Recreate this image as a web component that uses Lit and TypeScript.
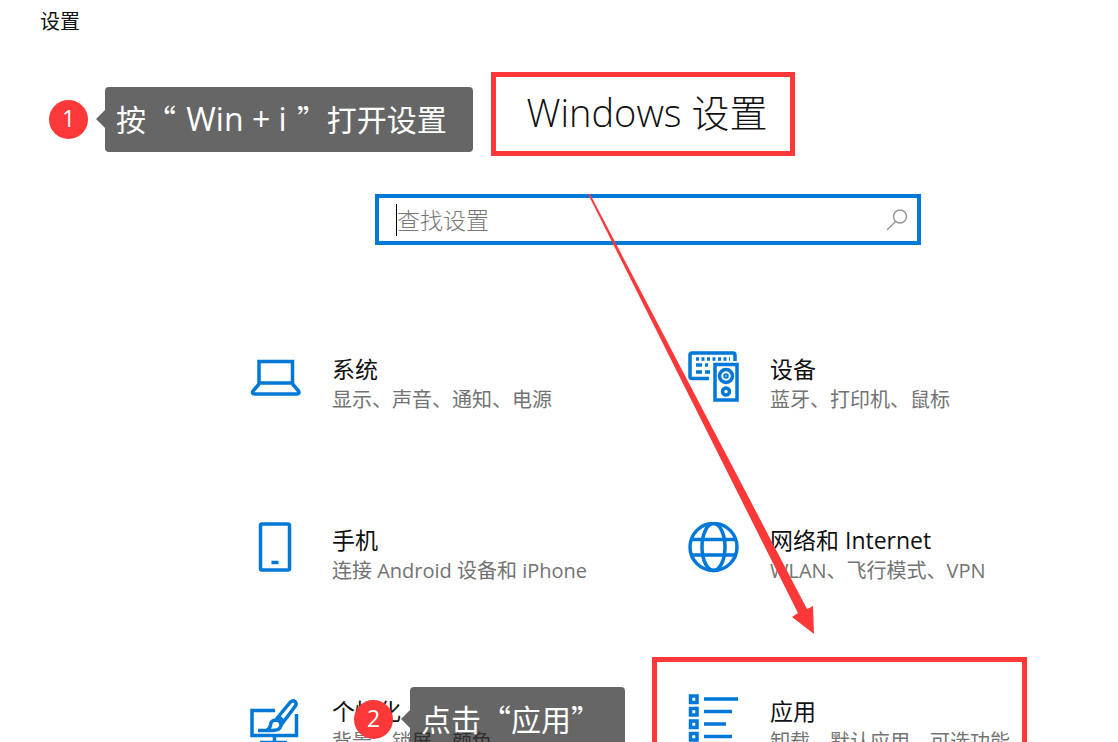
import { LitElement, html, svg, css } from "lit";
import { customElement, property } from "lit/decorators.js";

const icons: Record<string, unknown> = {
  system: svg`<path d="M9 10.500h33.500v21.500H9zM9 33 3 40q-1.500 3 1.500 3h42.500q3 0 1.500-3l-6-7"/>`,
  devices: svg`<path d="M21 27.500H4q-2 0-2-2V4q0-2 2-2h41q2 0 2 2v6"/><path stroke-dasharray="3 2.500" d="M8 8h34"/><path d="M8 14h6M17 14h3M8 21h6M17 21h5"/><path d="M27 13.500h22v35.500H27z"/><circle cx="38" cy="25" r="6.500"/><circle cx="38" cy="25" r="1"/><circle cx="38" cy="40.500" r="3.500"/>`,
  phone: svg`<rect x="10.500" y="2" width="29" height="46" rx="1.500"/><path d="M21.500 40.500h7"/>`,
  network: svg`<circle cx="25.500" cy="25" r="23.500"/><ellipse cx="25.500" cy="25" rx="11.500" ry="23.500"/><path d="M4 17.500h43M4 33h43"/>`,
  personal: svg`<path d="M25 17.500H2v25h44.500V21M24.500 43v7M10 49.500h27"/><path d="M26 26.500 40.500 9q3-2.500 5 0 1.500 2-.5 4.500L31.500 31.500M28.500 23.500l5.500 5"/><path d="M8 37.500h14q8 0 9-5 0-5-5-5.500-5 0-5.500 5-.5 3.500-3.500 5"/>`,
  apps: svg`<path d="M2.500 3H9v6.500H2.500zM2.500 15.500H9V22H2.500zM2.500 28H9v6.500H2.500zM2.500 40.500H9V47H2.500zM16 6h34M16 18.500h28M16 31h22M16 43.500h28"/>`,
};

@customElement("settings-tile")
export class SettingsTile extends LitElement {
  @property() icon = "";
  @property() name = "";
  @property() detail = "";

  static styles = css`
    :host { display: block; }
    .tile { display: flex; gap: 30px; align-items: flex-start; color: #111; text-decoration: none; }
    .icon { width: 52px; height: 52px; flex: none; fill: none; stroke: #0078d7; stroke-width: 3.500; }
    .text { display: flex; flex-direction: column; white-space: nowrap; }
    .name { font-size: 23px; line-height: 32px; padding-top: 2px; }
    .detail { font-size: 20px; line-height: 29px; color: #737373; }
  `;

  render() {
    return html`<a class="tile" href="#">
      <svg class="icon" viewBox="0 0 52 52" aria-hidden="true">${icons[this.icon]}</svg>
      <span class="text"><span class="name">${this.name}</span><span class="detail">${this.detail}</span></span>
    </a>`;
  }
}

@customElement("step-note")
export class StepNote extends LitElement {
  @property() step = "";

  static styles = css`
    :host { display: flex; align-items: center; gap: 17px; color: #fff; white-space: pre; }
    .badge { width: 39px; height: 39px; border-radius: 50%; background: #fd3838; text-align: center; font-size: 23px; line-height: 36px; }
    .bubble { position: relative; flex: 1; box-sizing: border-box; height: 65px; padding-left: 11px; border-radius: 4px; background: rgba(0, 0, 0, 0.6); font: 400 30px/63px "Noto Sans CJK SC", sans-serif; }
    .bubble::before { content: ""; position: absolute; left: -9px; top: 23px; border: solid transparent; border-width: 9px 9px 9px 0; border-right-color: rgba(0, 0, 0, 0.6); }
  `;

  render() {
    return html`<span class="badge">${this.step}</span><span class="bubble"><slot></slot></span>`;
  }
}

@customElement("app-root")
export class AppRoot extends LitElement {
  static styles = css`
    :host { display: block; position: relative; height: 100vh; overflow: hidden; background: #fff; color: #111; font-family: "Open Sans", "Noto Sans CJK SC", sans-serif; }
    .title { padding: 7px 40px 0; font-size: 20px; line-height: 30px; }
    main { padding-left: 178px; }
    .hero { display: flex; flex-direction: column; align-items: center; padding-top: 35px; }
    h1 { box-sizing: border-box; margin: 0 10px 0 0; padding-left: 8px; width: 304px; height: 84px; border: 5px solid #fd3838; text-align: center; font-size: 38px; line-height: 70px; font-weight: 300; white-space: nowrap; }
    .search { display: flex; align-items: center; box-sizing: border-box; width: 546px; height: 51px; margin-top: 38px; padding: 0 9px 0 17px; border: 4px solid #0078d7; }
    .search input { flex: 1; min-width: 0; padding: 0; border: 0; outline: 0; background: none; font: inherit; font-weight: 300; font-size: 23px; line-height: 32px; border-left: 1px solid #000; }
    .search input::placeholder { color: #777; opacity: 1; }
    .search svg { width: 22px; height: 24px; fill: none; stroke: #999; stroke-width: 1.500; }
    .grid { display: grid; grid-template-columns: repeat(2, 438px); grid-auto-rows: 171px; padding: 106px 0 0 72px; }
    .note { position: absolute; }
    .first { left: 49px; top: 87px; width: 424px; }
    .second { left: 354px; top: 687px; width: 271px; }
    .keys { padding: 0 2px; font: 400 32px/1 "Open Sans", sans-serif; }
    .frame { position: absolute; left: 652px; top: 657px; width: 365px; height: 130px; border: 5px solid #fd3838; }
    .arrow { position: absolute; left: 580px; top: 190px; width: 240px; height: 450px; fill: #fd3838; }
  `;

  render() {
    return html`
      <div class="title">设置</div>
      <main>
        <div class="hero">
          <h1>Windows 设置</h1>
          <label class="search">
            <input type="search" placeholder="查找设置" aria-label="查找设置" />
            <svg viewBox="0 0 22 24" aria-hidden="true"><circle cx="14" cy="8.500" r="6.500" /><path d="M9.500 13.500 1 22" /></svg>
          </label>
        </div>
        <nav class="grid">
          <settings-tile icon="system" name="系统" detail="显示、声音、通知、电源"></settings-tile>
          <settings-tile icon="devices" name="设备" detail="蓝牙、打印机、鼠标"></settings-tile>
          <settings-tile icon="phone" name="手机" detail="连接 Android 设备和 iPhone"></settings-tile>
          <settings-tile icon="network" name="网络和 Internet" detail="WLAN、飞行模式、VPN"></settings-tile>
          <settings-tile icon="personal" name="个性化" detail="背景、锁屏、颜色"></settings-tile>
          <settings-tile icon="apps" name="应用" detail="卸载、默认应用、可选功能"></settings-tile>
        </nav>
      </main>
      <div class="frame"></div>
      <step-note class="note first" step="1">按“<span class="keys"> Win + i </span>”打开设置</step-note>
      <step-note class="note second" step="2">点击“应用”</step-note>
      <svg class="arrow" viewBox="0 0 240 450" aria-hidden="true"><path d="M8 4h2L227 419l6-3 1 28-22-17 6-4z" /></svg>
    `;
  }
}
